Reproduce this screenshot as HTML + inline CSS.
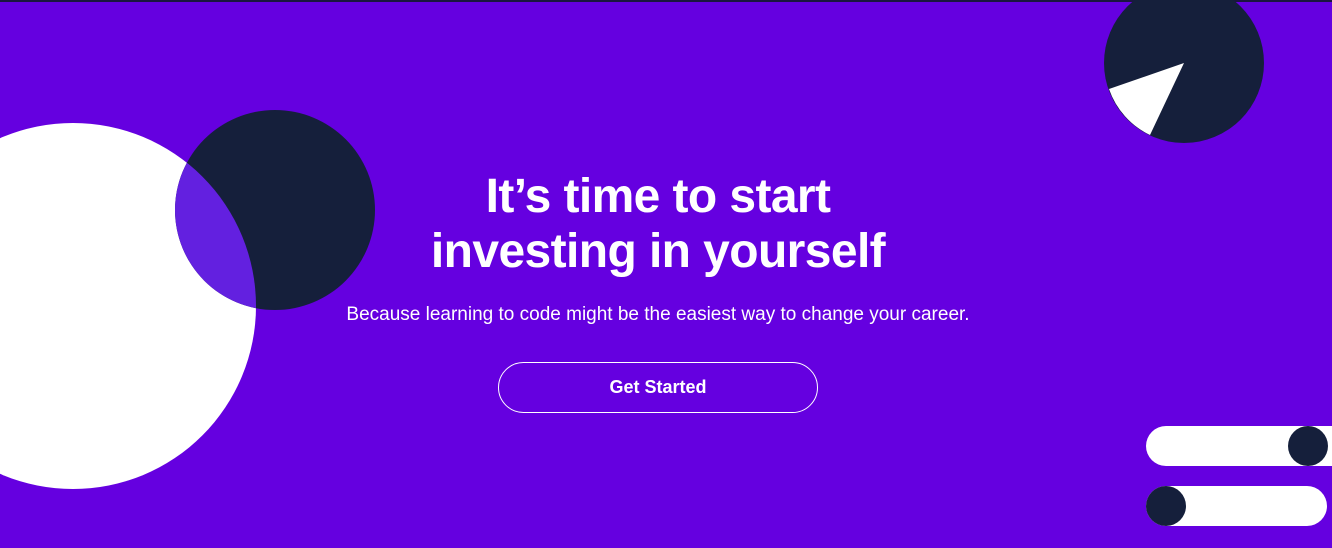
<!DOCTYPE html>
<html><head><meta charset="utf-8"><style>
html,body{margin:0;padding:0}
body{width:1332px;height:548px;overflow:hidden;background:#6500e0;position:relative;font-family:"Liberation Sans",sans-serif;color:#fff}
svg{position:absolute;left:0;top:0}
h1{position:absolute;left:0;width:1316px;top:169px;margin:0;text-align:center;font-size:48px;line-height:55px;font-weight:bold;letter-spacing:-0.6px}
p{position:absolute;left:0;width:1316px;top:304px;margin:0;text-align:center;font-size:19px}
.btn{position:absolute;left:498px;top:362px;width:318px;height:49px;border:1px solid #fff;border-radius:26px;text-align:center;line-height:49px;font-size:18px;font-weight:bold}
</style></head><body>
<svg width="1332" height="548" viewBox="0 0 1332 548">
<rect x="0" y="0" width="1332" height="2" fill="#1b1640"/>
<defs><clipPath id="w"><circle cx="73" cy="306" r="183"/></clipPath></defs>
<circle cx="73" cy="306" r="183" fill="#fff"/>
<circle cx="275" cy="210" r="100" fill="#151f3b"/>
<circle cx="275" cy="210" r="100" fill="#6320e0" clip-path="url(#w)"/>
<circle cx="1184" cy="63" r="80" fill="#151f3b"/>
<path d="M1184 63 L1109 89 A80 80 0 0 0 1150 135 Z" fill="#fff"/>
<rect x="1146" y="426" width="210" height="40" rx="20" fill="#fff"/>
<circle cx="1308" cy="446" r="20" fill="#151f3b"/>
<rect x="1146" y="486" width="181" height="40" rx="20" fill="#fff"/>
<circle cx="1166" cy="506" r="20" fill="#151f3b"/>
</svg>
<h1>It’s time to start<br>investing in yourself</h1>
<p>Because learning to code might be the easiest way to change your career.</p>
<div class="btn">Get Started</div>
</body></html>
